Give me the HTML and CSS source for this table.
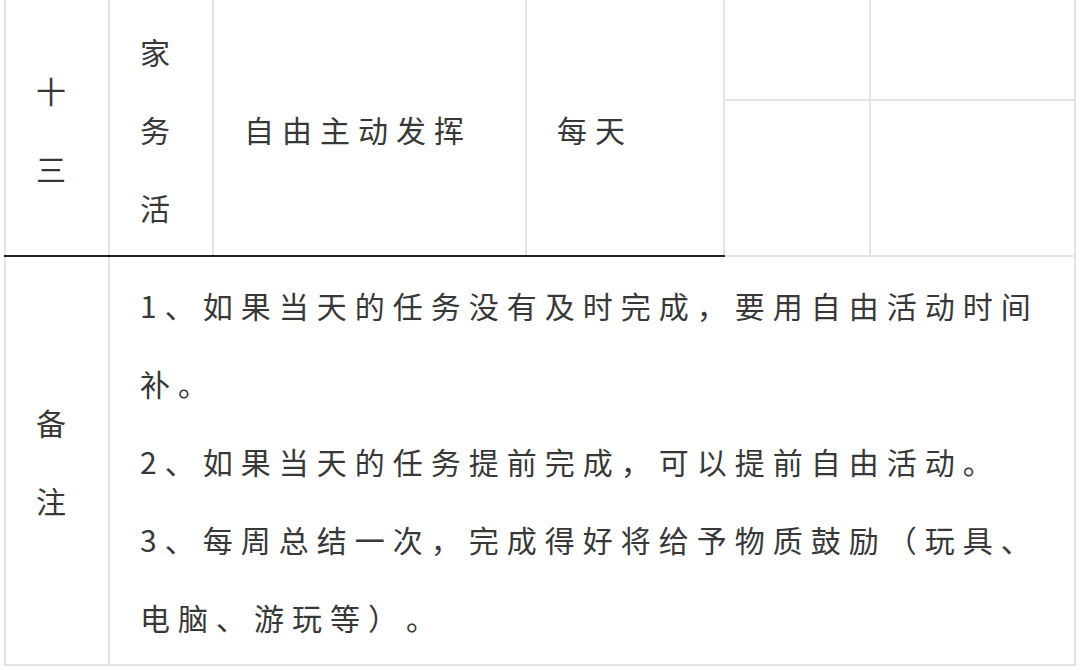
FILE: index.html
```html
<!DOCTYPE html>
<html lang="zh-CN">
<head>
<meta charset="utf-8">
<title>任务表</title>
<link rel="stylesheet" href="styles.css">
</head>
<body>
<table class="plan">
  <colgroup>
    <col class="c-idx">
    <col class="c-cat">
    <col class="c-task">
    <col class="c-freq">
    <col class="c-a">
    <col class="c-b">
  </colgroup>
  <tr class="sub-top">
    <td rowspan="2" class="main idx">十三</td>
    <td rowspan="2" class="main cat">家务活</td>
    <td rowspan="2" class="main task">自由主动发挥</td>
    <td rowspan="2" class="main freq">每天</td>
    <td class="check first"></td>
    <td class="check first"></td>
  </tr>
  <tr class="sub-bottom">
    <td class="check"></td>
    <td class="check"></td>
  </tr>
  <tr class="notes">
    <td class="label">备注</td>
    <td colspan="5" class="body">
      <p>1、如果当天的任务没有及时完成，要用自由活动时间补。</p>
      <p>2、如果当天的任务提前完成，可以提前自由活动。</p>
      <p>3、每周总结一次，完成得好将给予物质鼓励（玩具、电脑、游玩等）。</p>
    </td>
  </tr>
</table>
</body>
</html>
```

FILE: styles.css
```css
html, body {
  margin: 0;
  padding: 0;
  background: #ffffff;
}

body {
  font-family: "Noto Sans CJK SC", "Noto Sans", sans-serif;
  color: #383838;
  font-size: 30px;
  letter-spacing: 8px;
  text-spacing-trim: space-all;
}

.plan {
  border-collapse: collapse;
  table-layout: fixed;
  width: 1072px;
  margin-left: 4px;
}

.c-idx { width: 104px; }
.c-cat { width: 104px; }
.c-task { width: 313px; }
.c-freq { width: 198px; }
.c-a { width: 146px; }
.c-b { width: 205px; }

.plan td {
  border: 2px solid #e4e4e4;
  padding: 0 30px;
  line-height: 78px;
  text-align: left;
  vertical-align: middle;
}

.plan td.main {
  border-top-style: hidden;
  border-bottom: 2px solid #222222;
  padding-top: 12px;
  padding-bottom: 9px;
}

.plan td.check.first {
  border-top-style: hidden;
}

.plan td.check {
  padding: 0;
}

.sub-top {
  height: 100px;
}

.notes td {
  padding-top: 9px;
  padding-bottom: 8px;
}

.body p {
  margin: 0;
}
```
